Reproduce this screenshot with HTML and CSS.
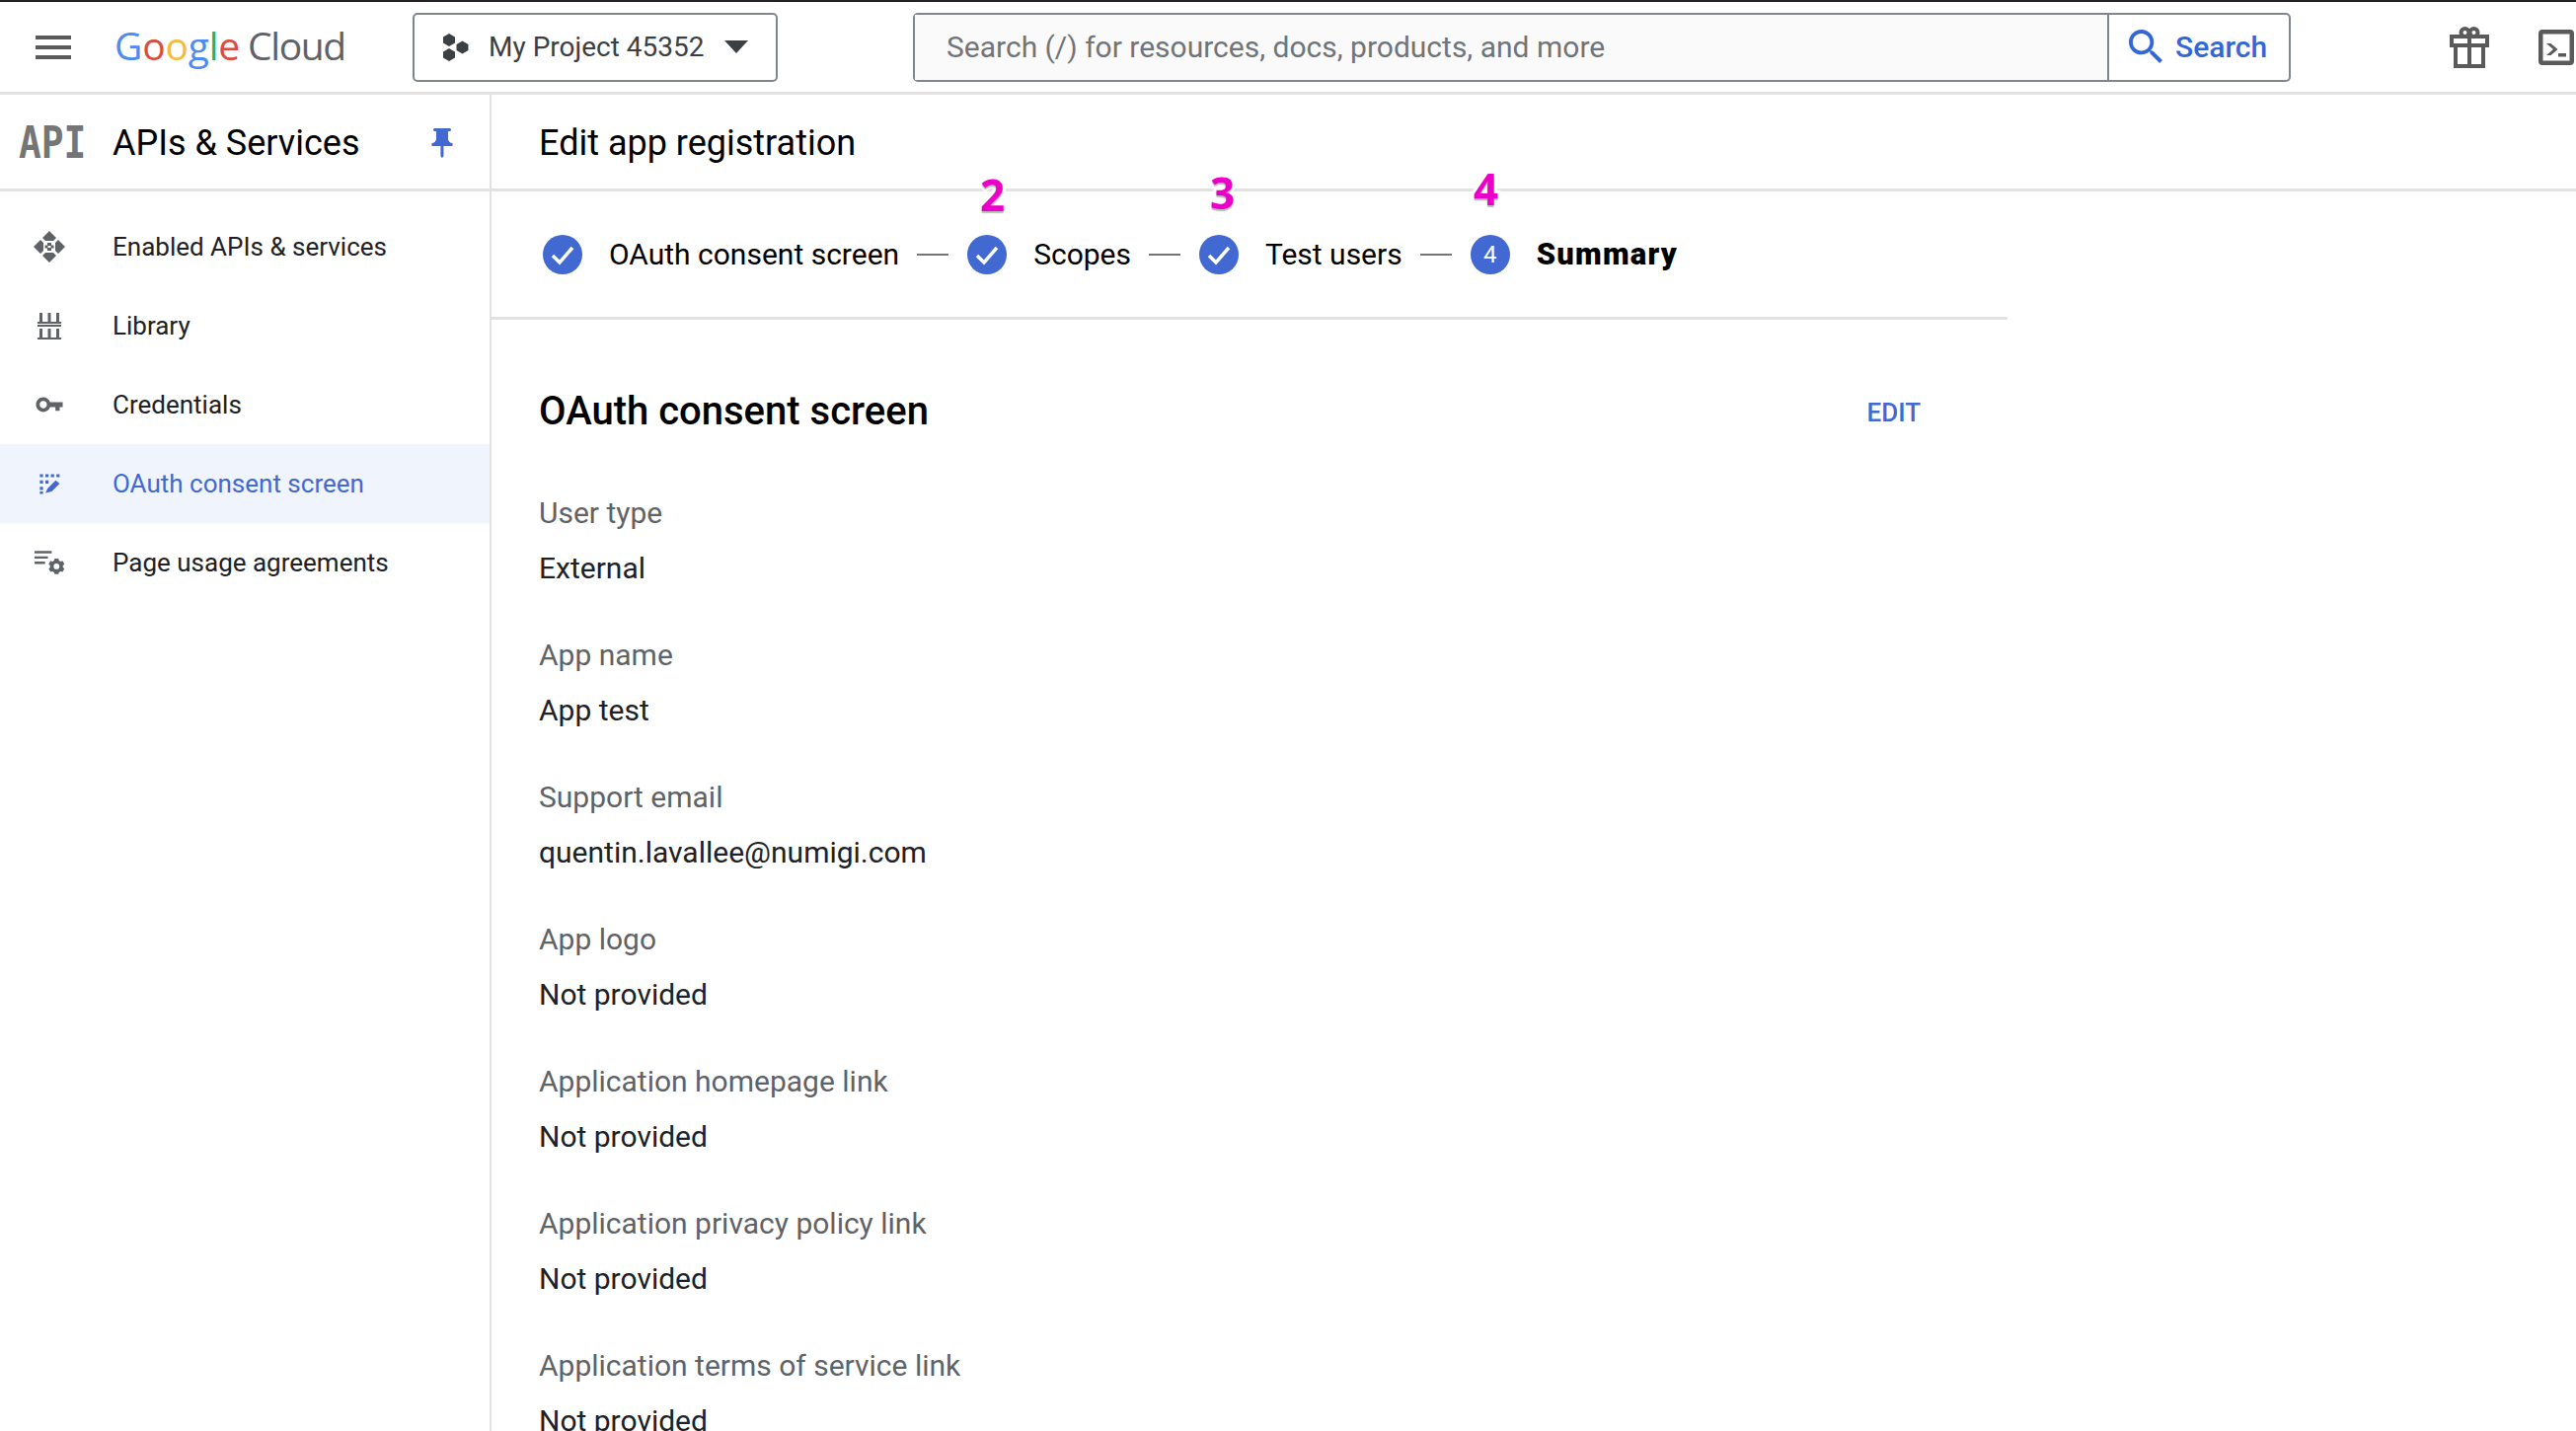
FILE: index.html
```html
<!DOCTYPE html>
<html lang="en">
<head>
  <meta charset="UTF-8">
  <meta name="viewport" content="width=device-width, initial-scale=1.0">
  <title>Edit app registration</title>
  <link rel="stylesheet" href="styles.css">
</head>
<body>
  <header class="topbar">
    <svg class="menu-icon" viewBox="0 0 36 24"><path d="M0 0h36v4H0zM0 10h36v4H0zM0 20h36v4H0z"/></svg>
    <div class="logo">
      <span class="g-blue">G</span><span class="g-red">o</span><span class="g-yellow">o</span><span class="g-blue">g</span><span class="g-green">l</span><span class="g-red">e</span>
      <span class="logo-cloud">Cloud</span>
    </div>
    <button class="project-btn">
      <svg class="hex-icon" viewBox="0 0 26 28"><path d="M6 0l6 3.5v6L6 13 0 9.5v-6zM6 15l6 3.5v6L6 28l-6-3.5v-6zM19.5 7.5l6 3.5v6l-6 3.5-6-3.5v-6z"/></svg>
      <span>My Project 45352</span>
      <svg class="caret" viewBox="0 0 24 13"><path d="M0 0h24L12 13z"/></svg>
    </button>
    <div class="search">
      <div class="search-input">Search (/) for resources, docs, products, and more</div>
      <div class="search-btn">
        <svg class="search-icon" viewBox="3 3 18 18"><path d="M15.5 14h-.79l-.28-.27C15.41 12.59 16 11.11 16 9.5 16 5.91 13.09 3 9.5 3S3 5.91 3 9.5 5.91 16 9.5 16c1.61 0 3.09-.59 4.23-1.57l.27.28v.79l5 4.99L20.49 19l-4.99-5zm-6 0C7.01 14 5 11.99 5 9.5S7.01 5 9.5 5 14 7.01 14 9.5 11.99 14 9.5 14z"/></svg>
        <span>Search</span>
      </div>
    </div>
    <div class="top-icons">
      <svg class="gift-icon" viewBox="0 0 40 42">
        <circle cx="15.5" cy="6" r="4"/>
        <circle cx="24.5" cy="6" r="4"/>
        <rect x="2" y="10" width="36" height="9"/>
        <path d="M6 19v21h28V19M20 10v30"/>
      </svg>
      <svg class="term-icon" viewBox="0 0 36 36"><path fill-rule="evenodd" d="M4 0h28a4 4 0 0 1 4 4v28a4 4 0 0 1-4 4H4a4 4 0 0 1-4-4V4a4 4 0 0 1 4-4zM4.5 4.5v27h27v-27zM8 14h4.5l7 6-7 6H8l7-6zM20 24h8v3.5h-8z"/></svg>
    </div>
  </header>

  <div class="layout">
    <aside class="sidebar">
      <div class="side-head">
        <span class="api-logo">API</span>
        <span class="side-title">APIs &amp; Services</span>
        <svg class="pin" viewBox="5 2 14 20"><path d="M16 9V4h1c.55 0 1-.45 1-1s-.45-1-1-1H7c-.55 0-1 .45-1 1s.45 1 1 1h1v5c0 1.66-1.34 3-3 3v2h5.97v7l1 1 1-1v-7H19v-2c-1.66 0-3-1.34-3-3z"/></svg>
      </div>
      <nav class="side-nav">
        <a class="nav-item">
          <svg class="nav-icon" viewBox="0 0 32 32"><path d="M16 0l7 7-3 3h-8L9 7zM0 16l7-7 3 3v8l-3 3zM32 16l-7 7-3-3v-8l3-3zM16 32l-7-7 3-3h8l3 3zM14 12h4v3h-4zM11.5 14.5h3v3h-3zM17.5 14.5h3v3h-3zM14 17h4v3h-4z"/></svg>
          <span>Enabled APIs &amp; services</span>
        </a>
        <a class="nav-item">
          <svg class="nav-icon" viewBox="0 0 32 32"><path d="M6 3h3v9H6zM14.5 3h3v9h-3zM23 3h3v9h-3zM4 12h24v2H4zM4 15h24v2H4zM6 19h3v10H6zM14.5 19h3v10h-3zM23 19h3v10h-3zM4 28h24v2H4z"/></svg>
          <span>Library</span>
        </a>
        <a class="nav-item">
          <svg class="nav-icon" viewBox="-1 0 26 24"><path d="M12.65 10C11.83 7.67 9.61 6 7 6c-3.31 0-6 2.69-6 6s2.69 6 6 6c2.61 0 4.83-1.67 5.65-4H17v3h3.5v-3H23v-4H12.65zM7 15c-1.66 0-3-1.34-3-3s1.34-3 3-3 3 1.34 3 3-1.34 3-3 3z" fill-rule="evenodd"/></svg>
          <span>Credentials</span>
        </a>
        <a class="nav-item active">
          <svg class="nav-icon" viewBox="-3 -3 40 40"><path d="M5 5h4v4H5zM12 5h4v4h-4zM19 5h4v4h-4zM26 5h4v4h-4zM5 13h4v4H5zM5 21h4v4H5zM5 27h4v3H5zM12 13h4v4h-4zM12 29l3-6 10-10 5 4-10 10z"/></svg>
          <span>OAuth consent screen</span>
        </a>
        <a class="nav-item">
          <svg class="nav-icon usage" viewBox="-1 0 33 24"><path d="M0 0h18v2.5H0zM0 5.5h14V8H0zM0 11h11v2.5H0z"/><path fill-rule="evenodd" d="M21 8h4l.5 2 1.8 1 2-.7 2 3.4-1.6 1.4v2l1.6 1.4-2 3.4-2-.7-1.8 1-.5 2h-4l-.5-2-1.800-1-2 .7-2-3.4 1.6-1.4v-2l-1.6-1.4 2-3.4 2 .7 1.8-1zM23 13a3 3 0 1 0 0 6 3 3 0 0 0 0-6z"/></svg>
          <span>Page usage agreements</span>
        </a>
      </nav>
    </aside>

    <main class="main">
      <div class="main-head">Edit app registration</div>
      <div class="stepper">
        <svg class="step-circle" viewBox="0 0 40 40"><circle cx="20" cy="20" r="20"/><path class="tick" d="M10 21l7 7 13-15"/></svg>
        <span class="step-label">OAuth consent screen</span>
        <i class="dash"></i>
        <svg class="step-circle" viewBox="0 0 40 40"><circle cx="20" cy="20" r="20"/><path class="tick" d="M10 21l7 7 13-15"/></svg>
        <span class="step-label">Scopes</span>
        <i class="dash"></i>
        <svg class="step-circle" viewBox="0 0 40 40"><circle cx="20" cy="20" r="20"/><path class="tick" d="M10 21l7 7 13-15"/></svg>
        <span class="step-label">Test users</span>
        <i class="dash"></i>
        <span class="step-num">4</span>
        <span class="step-label current">Summary</span>
        <span class="mark mark-2">2</span>
        <span class="mark mark-3">3</span>
        <span class="mark mark-4">4</span>
      </div>

      <section class="summary">
        <div class="summary-head">
          <h2>OAuth consent screen</h2>
          <a class="edit">EDIT</a>
        </div>
        <dl class="fields">
          <dt>User type</dt><dd>External</dd>
          <dt>App name</dt><dd>App test</dd>
          <dt>Support email</dt><dd>quentin.lavallee@numigi.com</dd>
          <dt>App logo</dt><dd>Not provided</dd>
          <dt>Application homepage link</dt><dd>Not provided</dd>
          <dt>Application privacy policy link</dt><dd>Not provided</dd>
          <dt>Application terms of service link</dt><dd>Not provided</dd>
        </dl>
      </section>
    </main>
  </div>
</body>
</html>
```

FILE: styles.css
```css
html, body {
  margin: 0;
  padding: 0;
  height: 1450px;
  overflow: hidden;
}
body {
  font-family: Roboto, "Liberation Sans", sans-serif;
  background: white;
  color: #000;
}

/* top bar */
.topbar {
  display: flex;
  align-items: center;
  height: 91px;
  border-top: 2px solid #222;
  border-bottom: 3px solid #e2e2e2;
  padding-left: 36px;
}
.menu-icon {
  width: 36px;
  height: 24px;
  fill: #5a5a5a;
  margin-right: 44px;
}
.logo {
  display: flex;
  align-items: baseline;
  width: 287px;
  padding-bottom: 4px;
  font-family: "Open Sans", sans-serif;
  font-size: 39px;
  font-weight: 500;
  letter-spacing: -0.2px;
}
.g-blue { color: #4e8af0; }
.g-red { color: #dc4c3e; }
.g-yellow { color: #f4bc3e; }
.g-green { color: #43a853; }
.logo-cloud {
  color: #5f6368;
  margin-left: 8px;
  font-weight: 400;
  letter-spacing: -1.4px;
}
.project-btn {
  display: flex;
  align-items: center;
  width: 370px;
  height: 70px;
  margin-left: 15px;
  padding: 0 0 0 29px;
  background: white;
  border: 2px solid #80868b;
  border-radius: 5px;
  font-family: inherit;
  font-size: 28px;
  color: #3c4043;
}
.hex-icon {
  width: 26px;
  height: 28px;
  fill: #3c4043;
  margin-right: 20px;
}
.caret {
  width: 24px;
  height: 13px;
  fill: #3c4043;
  margin-left: 21px;
}
.search {
  display: flex;
  width: 1396px;
  height: 70px;
  margin-left: 137px;
  box-sizing: border-box;
  border: 2px solid #80868b;
  border-radius: 5px;
}
.search-input {
  flex: 1;
  display: flex;
  align-items: center;
  padding-left: 32px;
  background: #fafafa;
  border-right: 2px solid #80868b;
  font-size: 30px;
  color: #70757a;
}
.search-btn {
  display: flex;
  align-items: center;
  width: 182px;
  padding-left: 20px;
  box-sizing: border-box;
  font-size: 30px;
  font-weight: 500;
  color: #3367d6;
}
.search-icon {
  width: 35px;
  height: 35px;
  fill: #3367d6;
  margin-right: 12px;
}
.top-icons {
  display: flex;
  align-items: center;
  margin-left: 161px;
}
.gift-icon {
  width: 40px;
  height: 42px;
  fill: none;
  stroke: #5a5a5a;
  stroke-width: 4;
}
.term-icon {
  width: 36px;
  height: 36px;
  fill: #5a5a5a;
  margin-left: 50px;
}

/* page */
.layout {
  display: flex;
  height: 1354px;
}
.sidebar {
  width: 496px;
  flex-shrink: 0;
  border-right: 2px solid #e2e2e2;
}
.side-head, .main-head {
  display: flex;
  align-items: center;
  height: 93px;
  padding-top: 2px;
  border-bottom: 3px solid #e2e2e2;
}
.side-head {
  padding-left: 19px;
}
.api-logo {
  width: 66px;
  font-family: "DejaVu Sans Mono", monospace;
  font-size: 44px;
  font-weight: 700;
  color: #757575;
  transform: scaleX(0.86);
  transform-origin: left center;
  white-space: nowrap;
}
.side-title {
  margin-left: 29px;
  font-size: 36px;
  width: 300px;
}
.pin {
  width: 22px;
  height: 30px;
  fill: #4169d1;
  margin-left: 23px;
}
.side-nav {
  padding-top: 16px;
}
.nav-item {
  display: flex;
  align-items: center;
  height: 80px;
  padding-bottom: 1px;
  box-sizing: border-box;
  font-size: 26px;
  color: #202124;
}
.nav-icon {
  width: 32px;
  height: 32px;
  margin-left: 34px;
  margin-right: 48px;
  fill: #5f6368;
}
.nav-item.active {
  background: #f0f4fd;
  color: #4169d1;
}
.nav-item.active .nav-icon {
  fill: #4169d1;
}
.nav-icon.usage {
  height: 24px;
}

/* main */
.main {
  flex: 1;
}
.main-head {
  padding-left: 48px;
  font-size: 36px;
}
.stepper {
  position: relative;
  display: flex;
  align-items: center;
  width: 1536px;
  height: 130px;
  padding-left: 52px;
  box-sizing: border-box;
  border-bottom: 3px solid #e2e2e2;
}
.step-circle {
  width: 40px;
  height: 40px;
  flex-shrink: 0;
}
.step-circle circle {
  fill: #4169d1;
}
.tick {
  fill: none;
  stroke: white;
  stroke-width: 3.5;
}
.step-num {
  width: 40px;
  height: 40px;
  flex-shrink: 0;
  display: flex;
  align-items: center;
  justify-content: center;
  border-radius: 50%;
  background: #4169d1;
  color: white;
  font-size: 24px;
}
.step-label {
  margin-left: 27px;
  font-size: 30px;
}
.step-label.current {
  font-size: 31px;
  font-weight: 900;
  letter-spacing: 1.2px;
}
.dash {
  width: 32px;
  height: 2px;
  margin: 0 19px 0 18px;
  background: #757575;
}
.mark {
  position: absolute;
  font-family: "Open Sans", sans-serif;
  font-size: 44px;
  font-weight: 700;
  line-height: 44px;
  color: #ea00c8;
  -webkit-text-stroke: 6px white;
  paint-order: stroke fill;
  text-shadow: 0 2px 1px #bbb;
}
.mark-2 { left: 495px; top: -19px; }
.mark-3 { left: 728px; top: -21px; }
.mark-4 { left: 995px; top: -25px; }

.summary {
  width: 1486px;
  margin-left: 48px;
  box-sizing: border-box;
}
.summary-head {
  display: flex;
  align-items: center;
  justify-content: space-between;
  height: 50px;
  margin-top: 67px;
  padding-right: 86px;
}
.summary-head h2 {
  margin: 0;
  font-size: 40px;
  font-weight: 500;
}
.edit {
  font-size: 26px;
  font-weight: 500;
  color: #4169d1;
  padding-top: 3px;
}
.fields {
  margin: 59px 0 0;
}
.fields dt {
  font-size: 30px;
  line-height: 40px;
  color: #5f6368;
}
.fields dd {
  margin: 16px 0 48px;
  font-size: 30px;
  line-height: 40px;
  color: #202124;
}
```
